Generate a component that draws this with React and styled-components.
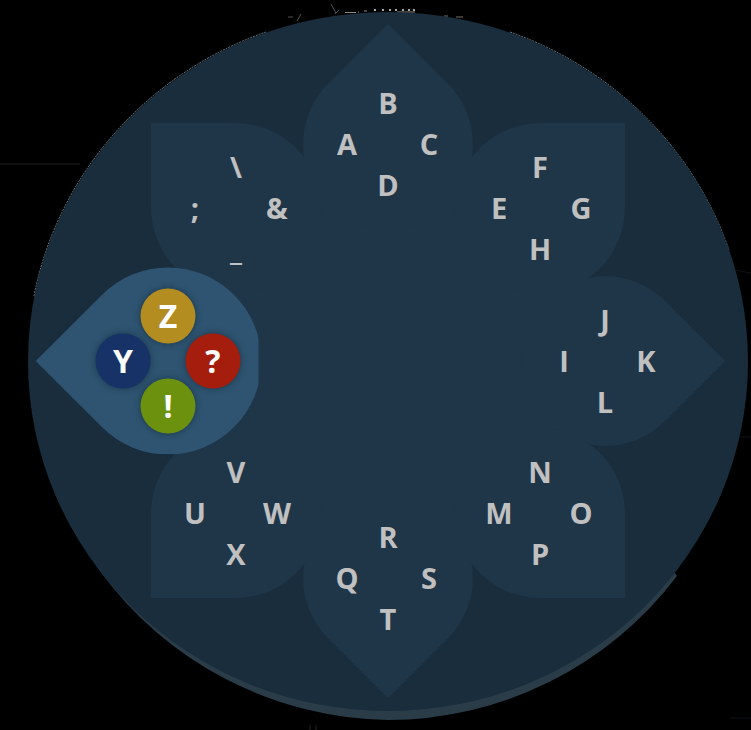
import React from "react";
import styled, { createGlobalStyle, css } from "styled-components";

const GlobalStyle = createGlobalStyle`
  body {
    margin: 0;
    background: #000;
  }
  *, *::before, *::after { box-sizing: border-box; }
`;

/* Dial geometry, expressed as shares of the dial box so it scales with it. */
const DIAL_W = 720;
const DIAL_H = 699;
const shareX = (n) => `${(n / DIAL_W) * 100}%`;
const shareY = (n) => `${(n / DIAL_H) * 100}%`;

/* Diagonal petals sit slightly closer to the hub than the upright ones. */
const RING = 217;
const DIAGONAL_RING = 215;
const ACTIVE_RING = 220;
const radians = (angle) => (angle * Math.PI) / 180;
const ringFor = ({ $angle, $active }) => {
  if ($active) return ACTIVE_RING;
  return $angle % 90 === 0 ? RING : DIAGONAL_RING;
};

const Page = styled.main`
  isolation: isolate;
  min-height: 100vh;
  padding: 12px 3px 16px 28px;
  overflow: hidden;
  background: #000;
`;

const Dial = styled.div`
  position: relative;
  width: 100%;
  aspect-ratio: ${DIAL_W} / ${DIAL_H};
  border-radius: 50%;
  background: #192d3d;
`;

const Trim = styled.svg`
  position: absolute;
  inset: 0;
  z-index: -1;
  width: 100%;
  height: 100%;
  overflow: visible;
`;

const Petals = styled.div`
  position: absolute;
  inset: -1px 0 1px;
`;

const Hub = styled.div`
  position: absolute;
  top: 50%;
  left: 50%;
  width: ${shareX(400)};
  aspect-ratio: 1;
  border-radius: 50%;
  background: #1f3548;
  transform: translate(-50%, -50%);
`;

const Petal = styled.div`
  position: absolute;
  left: calc(50% + ${(p) => shareX(Math.cos(radians(p.$angle)) * ringFor(p))});
  top: calc(50% + ${(p) => shareY(Math.sin(radians(p.$angle)) * ringFor(p))});
  display: grid;
  place-content: center;
  width: ${(p) => shareX(p.$active ? 187 : 170)};
  aspect-ratio: 1;
  transform: translate(-50%, -50%);

  &::before {
    content: "";
    position: absolute;
    inset: 0;
    border-radius: 50% 0 50% 50%;
    background: ${(p) => (p.$active ? "#2e5471" : "#1f3548")};
    transform: rotate(${(p) => p.$angle + 45}deg);
  }

  ${(p) => p.$active && css`
    z-index: 1;
    clip-path: inset(0 3px 0 -50%);
  `}
`;

const Keys = styled.div`
  position: relative;
  display: grid;
  grid-template: repeat(3, ${(p) => (p.$active ? 45 : 41)}px) / repeat(3, ${(p) => (p.$active ? 45 : 41)}px);
  grid-template-areas:
    ". top ."
    "left . right"
    ". bottom .";
  place-items: center;
`;

const Key = styled.button`
  grid-area: ${(p) => p.$side};
  display: flex;
  align-items: center;
  justify-content: center;
  width: 40px;
  height: 40px;
  padding: 0;
  border: 0;
  border-radius: 50%;
  background: transparent;
  color: #c0c0c0;
  font: 700 29px/40px "Open Sans", "Noto Sans", sans-serif;
  cursor: pointer;

  ${(p) => p.$tint && css`
    width: 55px;
    height: 55px;
    background: ${p.$tint};
    color: #fff;
    font-size: 32px;
    box-shadow: 0 0 6px rgba(10, 25, 40, 0.5);
  `}
`;

const SIDES = ["left", "top", "right", "bottom"];
const TINTS = ["#163266", "#b38d1f", "#a41d0d", "#6c910f"];

const GROUPS = [
  { angle: -90, keys: "ABCD" },
  { angle: -45, keys: "EFGH" },
  { angle: 0, keys: "IJKL" },
  { angle: 45, keys: "MNOP" },
  { angle: 90, keys: "QRST" },
  { angle: 135, keys: "UVWX" },
  { angle: 180, keys: "YZ?!", active: true },
  { angle: -135, keys: ";\\&_" },
];

function DialTrim() {
  return (
    <Trim viewBox="28 12 720 699" preserveAspectRatio="none" aria-hidden="true" fill="none">
      <path d="M677 576 A362 359 0 0 1 388 720 A362 359 0 0 1 100 571 L125 540 H650Z" fill="#293c48" />
      <path d="M34 296 A360 350 0 0 1 266 32" stroke="#71808a" strokeWidth="1" strokeDasharray="2 1" />
      <path d="M510 32 A360 350 0 0 1 729 250" stroke="#71808a" strokeWidth="1" strokeDasharray="2 1" />
      <path d="M0 164H80" stroke="#101010" strokeWidth="2" />
      <path d="M310 725V730M316 725V730" stroke="#242424" />
      <path d="M735 270L751 273M740 437H751M730 718H751" stroke="#0c1216" />
      <path d="M288 17H293M301 14L297 21" stroke="#57534a" />
      <path d="M331 4L336 13M339 10L335 14" stroke="#46535c" />
      <path d="M345 12.500H356M358 12H359M364 11H367" stroke="#8e8b80" />
      <path d="M374 10H376M382 10H384M389 10H391M395 10H397M402 10H404M408 10H410M413 10H415" stroke="#9eaaae" strokeWidth="2" />
      <path d="M397 12H415" stroke="#8d877c" />
      <path d="M444 16H448M456 17H463" stroke="#787269" />
    </Trim>
  );
}

export default function App() {
  return (
    <>
      <GlobalStyle />
      <Page>
        <Dial role="group" aria-label="Character dial">
          <DialTrim />
          <Petals>
            <Hub />
            {GROUPS.map(({ angle, keys, active }) => (
              <Petal key={angle} $angle={angle} $active={active}>
                <Keys $active={active}>
                  {[...keys].map((char, i) => (
                    <Key key={char} type="button" $side={SIDES[i]} $tint={active && TINTS[i]}>
                      {char}
                    </Key>
                  ))}
                </Keys>
              </Petal>
            ))}
          </Petals>
        </Dial>
      </Page>
    </>
  );
}
